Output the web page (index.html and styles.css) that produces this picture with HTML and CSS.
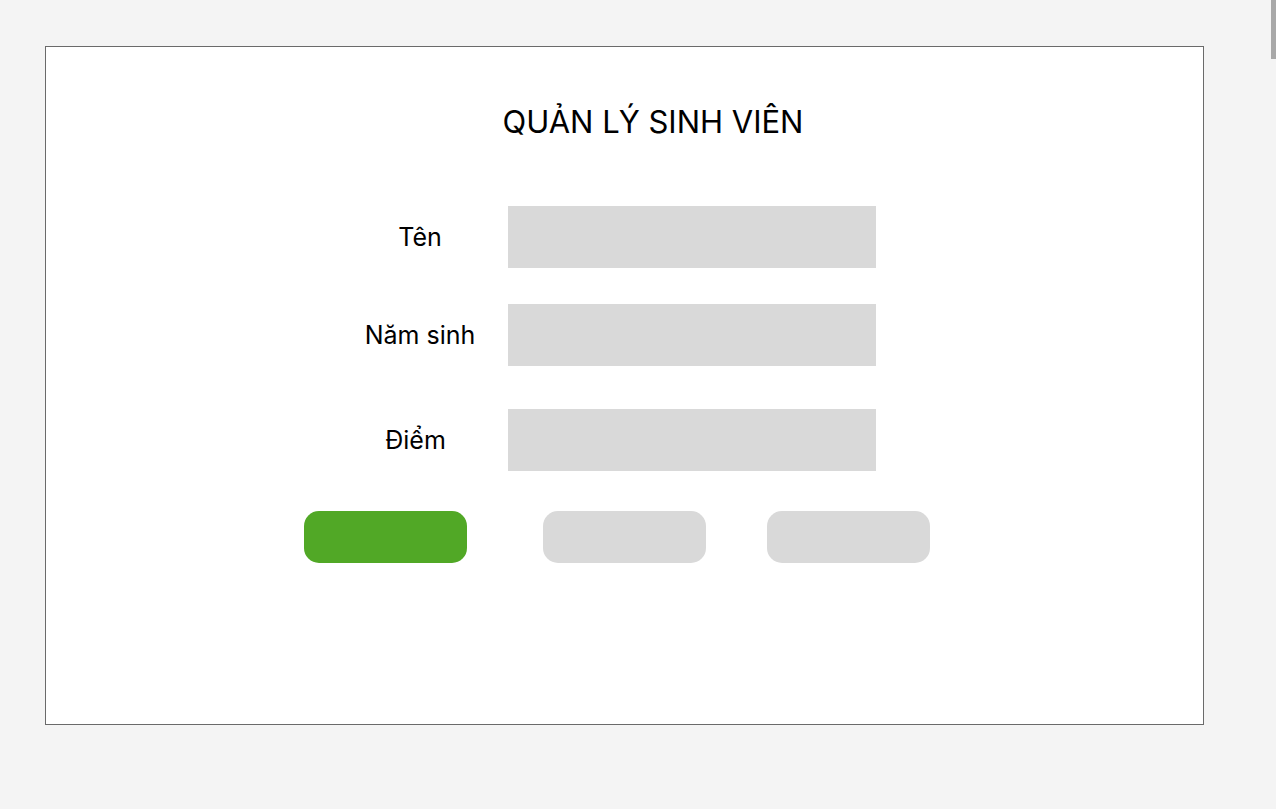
FILE: index.html
```html
<!DOCTYPE html>
<html lang="vi">
<head>
<meta charset="utf-8">
<title>Quản lý sinh viên</title>
<link rel="stylesheet" href="styles.css">
</head>
<body>
<div class="scroll-thumb"></div>
<main class="frame">
  <h1 class="title">QUẢN LÝ SINH VIÊN</h1>
  <form class="form">
    <div class="row row-1">
      <label class="label">Tên</label>
      <div class="field"></div>
    </div>
    <div class="row row-2">
      <label class="label">Năm sinh</label>
      <div class="field"></div>
    </div>
    <div class="row row-3">
      <label class="label label-diem">Điểm</label>
      <div class="field"></div>
    </div>
  </form>
  <div class="actions">
    <div class="btn btn-green"></div>
    <div class="btn btn-gray btn-2"></div>
    <div class="btn btn-gray btn-3"></div>
  </div>
</main>
</body>
</html>
```

FILE: styles.css
```css
html, body {
  margin: 0;
  padding: 0;
  background: #f4f4f4;
  font-family: Inter, "Noto Sans", "Liberation Sans", sans-serif;
  color: #000;
}

body {
  padding: 46px 0 0 45px;
  height: 809px;
  box-sizing: border-box;
  overflow: hidden;
}

.scroll-thumb {
  position: fixed;
  top: 0;
  right: 0;
  width: 5px;
  height: 59px;
  background: #a8a8a8;
}

.frame {
  width: 1159px;
  height: 679px;
  box-sizing: border-box;
  background: #fff;
  border: 1px solid #6a6a6a;
  display: flex;
  flex-direction: column;
}

.title {
  margin: 56px 0 0 0;
  font-size: 31px;
  font-weight: 400;
  line-height: 38px;
  text-align: center;
  padding-left: 57px;
}

.form {
  margin: 65px 0 0 0;
  padding-left: 314px;
  display: flex;
  flex-direction: column;
}

.row {
  display: flex;
  align-items: center;
  gap: 28px;
}

.row-2 { margin-top: 36px; }
.row-3 { margin-top: 43px; }

.label {
  width: 120px;
  text-align: center;
  font-size: 25px;
  line-height: 30px;
}

.label-diem {
  padding-right: 9px;
  box-sizing: border-box;
}

.field {
  width: 368px;
  height: 62px;
  background: #d9d9d9;
}

.actions {
  display: flex;
  margin-top: 40px;
  padding-left: 258px;
}

.btn {
  width: 163px;
  height: 52px;
  border-radius: 15px;
}

.btn-green { background: #51a826; }
.btn-gray { background: #d9d9d9; }
.btn-2 { margin-left: 76px; }
.btn-3 { margin-left: 61px; }
```
